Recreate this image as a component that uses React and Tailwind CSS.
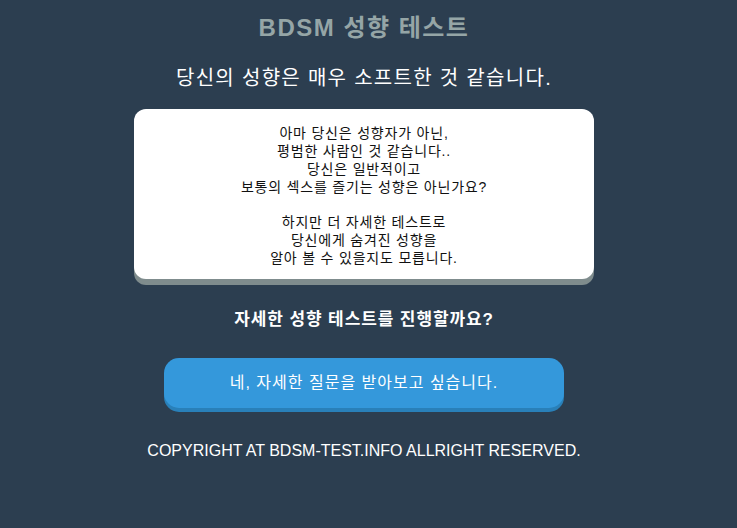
import React from 'react';

const font = { fontFamily: '"Liberation Sans", "Noto Sans CJK KR", sans-serif' };

const App = () => {
  return (
    <div className="min-h-[528px] w-full bg-[#2c3e50] flex flex-col items-center pr-[9px]" style={font}>
      <h1 className="mt-[14px] text-[24px] leading-[28px] font-bold text-[#95a5a6] tracking-[1.5px]">BDSM 성향 테스트</h1>
      <h2 className="mt-[22px] text-[20px] leading-[28px] text-white tracking-[1.3px]">당신의 성향은 매우 소프트한 것 같습니다.</h2>

      <div className="mt-[17px] w-[460px] h-[170px] bg-white rounded-[12px] shadow-[0_6px_0_#7f8c8d] px-4 pt-[15px] text-center text-[14px] leading-[18px] tracking-[0.8px] text-[#111]">
        <p>
          아마 당신은 성향자가 아닌,<br />
          평범한 사람인 것 같습니다..<br />
          당신은 일반적이고<br />
          보통의 섹스를 즐기는 성향은 아닌가요?
        </p>
        <p className="mt-[17px]">
          하지만 더 자세한 테스트로<br />
          당신에게 숨겨진 성향을<br />
          알아 볼 수 있을지도 모릅니다.
        </p>
      </div>

      <p className="mt-[29px] text-[17px] leading-[24px] font-bold text-white tracking-[0.9px]">자세한 성향 테스트를 진행할까요?</p>

      <button className="mt-[26px] w-[400px] h-[50px] rounded-[15px] bg-[#3498db] shadow-[0_4px_0_#2980b9] text-white text-[16px] tracking-[1px]">
        네, 자세한 질문을 받아보고 싶습니다.
      </button>

      <p className="mt-[33px] text-[16px] leading-[20px] text-white">COPYRIGHT AT BDSM-TEST.INFO ALLRIGHT RESERVED.</p>
    </div>
  );
};

export default App;
